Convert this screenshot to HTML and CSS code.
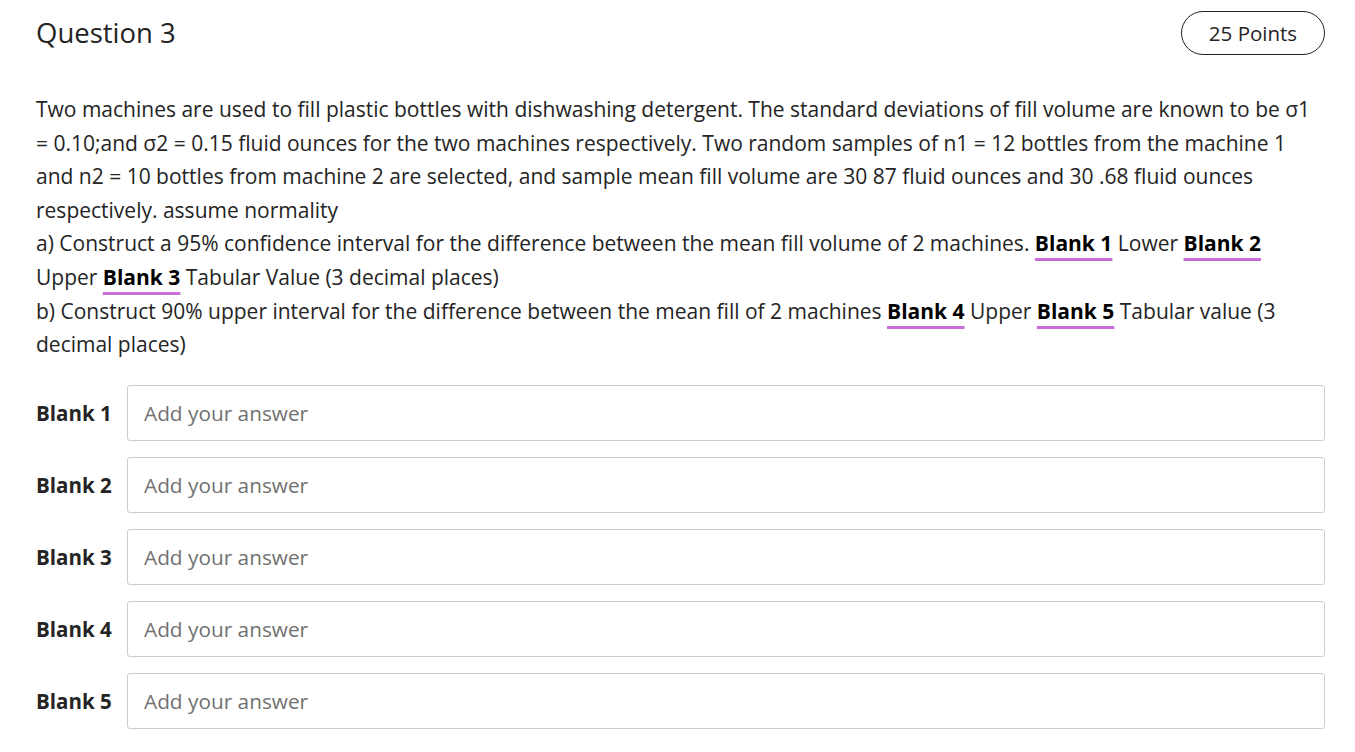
FILE: index.html
```html
<!DOCTYPE html>
<html>
<head>
<meta charset="utf-8">
<link rel="stylesheet" href="styles.css">
</head>
<body>
<div class="question">
  <div class="header">
    <h1 class="title">Question 3</h1>
    <div class="points">25 Points</div>
  </div>
  <div class="body">
    Two machines are used to fill plastic bottles with dishwashing detergent. The standard deviations of fill volume are known to be σ1 = 0.10;and σ2 = 0.15 fluid ounces for the two machines respectively. Two random samples of n1 = 12 bottles from the machine 1 and n2 = 10 bottles from machine 2 are selected, and sample mean fill volume are 30 87 fluid ounces and 30 .68 fluid ounces respectively. assume normality<br>
    a) Construct a 95% confidence interval for the difference between the mean fill volume of 2 machines. <span class="blank">Blank 1</span> Lower <span class="blank">Blank 2</span> Upper <span class="blank">Blank 3</span> Tabular Value (3 decimal places)<br>
    b) Construct 90% upper interval for the difference between the mean fill of 2 machines <span class="blank">Blank 4</span> Upper <span class="blank">Blank 5</span> Tabular value (3 decimal places)
  </div>
  <div class="answers">
    <div class="row"><span class="label">Blank 1</span><div class="input">Add your answer</div></div>
    <div class="row"><span class="label">Blank 2</span><div class="input">Add your answer</div></div>
    <div class="row"><span class="label">Blank 3</span><div class="input">Add your answer</div></div>
    <div class="row"><span class="label">Blank 4</span><div class="input">Add your answer</div></div>
    <div class="row"><span class="label">Blank 5</span><div class="input">Add your answer</div></div>
  </div>
</div>
</body>
</html>
```
FILE: styles.css
```css
html, body {
  margin: 0;
  padding: 0;
  background: #ffffff;
}
body {
  font-family: "Open Sans", "Noto Sans", sans-serif;
  color: #242424;
}
.question {
  padding: 11px 30px 0 36px;
}
.header {
  display: flex;
  justify-content: space-between;
  align-items: center;
}
.title {
  margin: 0;
  font-size: 27.5px;
  font-weight: 500;
  line-height: 44px;
}
.points {
  box-sizing: border-box;
  height: 44px;
  width: 144px;
  border: 1px solid #242424;
  border-radius: 22px;
  font-size: 20.5px;
  font-weight: 500;
  display: flex;
  align-items: center;
  justify-content: center;
}
.body {
  margin-top: 38px;
  margin-right: 8px;
  font-size: 21px;
  line-height: 33.6px;
}
.blank {
  font-weight: 700;
  color: #000;
  text-decoration: underline;
  text-decoration-color: #c86dd7;
  text-decoration-thickness: 3px;
  text-underline-offset: 7px;
}
.answers {
  margin-top: 23px;
  display: flex;
  flex-direction: column;
  gap: 16px;
}
.row {
  display: flex;
  align-items: center;
}
.label {
  width: 91px;
  font-size: 20.5px;
  font-weight: 700;
  color: #242424;
}
.input {
  flex: 1;
  box-sizing: border-box;
  height: 56px;
  border: 1px solid #cccccc;
  border-radius: 3px;
  padding-left: 16px;
  display: flex;
  align-items: center;
  font-size: 20.8px;
  color: #717171;
}
```
